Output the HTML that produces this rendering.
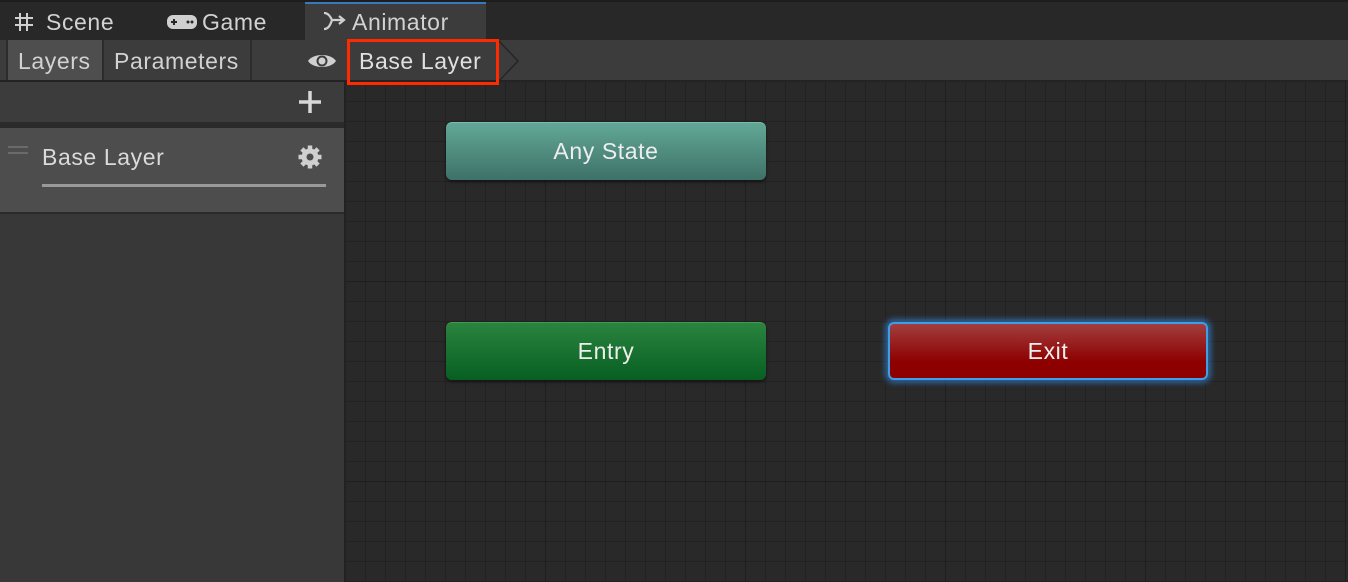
<!DOCTYPE html>
<html><head><style>
*{margin:0;padding:0;box-sizing:border-box}
body{width:1348px;height:582px;overflow:hidden;background:#383838;font-family:"Liberation Sans",sans-serif;color:#d2d2d2;position:relative}
.abs{position:absolute}
.t{font-size:23px;letter-spacing:0.6px;white-space:nowrap}
.node{position:absolute;border-radius:6px;color:#eee;font-size:23px;letter-spacing:0.6px;text-align:center;line-height:56px;box-shadow:0 2px 3px rgba(0,0,0,.5)}
</style></head><body>
<!-- tab bar -->
<div class="abs" style="left:0;top:0;width:1348px;height:40px;background:#282828;border-top:2px solid #1d1d1d"></div>
<div class="abs" style="left:305px;top:2px;width:181px;height:38px;background:#3c3c3c;border-top:2px solid #3a79bb"></div>
<svg class="abs" style="left:14px;top:12px" width="20" height="20" viewBox="0 0 20 20" stroke="#d0d0d0" stroke-width="2"><path d="M6 1v18M13 1v18M1 6h18M1 13h18"/></svg>
<div class="abs t" style="left:46px;top:9px">Scene</div>
<svg class="abs" style="left:167px;top:15px" width="30" height="14" viewBox="0 0 30 14"><rect x="0" y="0" width="30" height="14" rx="6" fill="#d0d0d0"/><rect x="4" y="6" width="6" height="2" fill="#282828"/><rect x="6" y="4" width="2" height="6" fill="#282828"/><circle cx="21" cy="7" r="1.5" fill="#282828"/><circle cx="25" cy="7" r="1.5" fill="#282828"/></svg>
<div class="abs t" style="left:202px;top:9px">Game</div>
<svg class="abs" style="left:322px;top:11px" width="24" height="22" viewBox="0 0 24 22" fill="none" stroke="#d0d0d0" stroke-width="2.2"><path d="M2 2c4 0 6 3 8 7h12M2 18c4 0 6-3 8-9M17 5l5 4-5 4"/></svg>
<div class="abs t" style="left:352px;top:9px">Animator</div>
<!-- toolbar -->
<div class="abs" style="left:0;top:40px;width:1348px;height:40px;background:#3c3c3c"></div>
<div class="abs" style="left:0;top:80px;width:1348px;height:2px;background:#232323"></div>
<div class="abs" style="left:6px;top:40px;width:2px;height:40px;background:#2c2c2c"></div>
<div class="abs" style="left:8px;top:40px;width:94px;height:40px;background:#4e4e4e"></div>
<div class="abs" style="left:102px;top:40px;width:2px;height:40px;background:#2c2c2c"></div>
<div class="abs" style="left:250px;top:40px;width:2px;height:40px;background:#2c2c2c"></div>
<div class="abs t" style="left:18px;top:48px">Layers</div>
<div class="abs t" style="left:114px;top:48px">Parameters</div>
<svg class="abs" style="left:307px;top:51px" width="30" height="20" viewBox="0 0 30 20"><path d="M1 10C6 2 24 2 29 10C24 18 6 18 1 10Z" fill="#d0d0d0"/><circle cx="15" cy="10" r="5.5" fill="#3c3c3c"/><circle cx="15" cy="10" r="3.5" fill="#d0d0d0"/></svg>
<svg class="abs" style="left:496px;top:40px" width="24" height="42" viewBox="0 0 24 42"><path d="M2 0L22 21L2 42" fill="#3c3c3c" stroke="#252525" stroke-width="1.5"/></svg>
<div class="abs t" style="left:359px;top:48px;color:#e0e0e0">Base Layer</div>
<!-- left panel -->
<div class="abs" style="left:0;top:82px;width:344px;height:40px;background:#3c3c3c"></div>
<svg class="abs" style="left:298px;top:90px" width="24" height="24" viewBox="0 0 24 24" stroke="#d8d8d8" stroke-width="3.5"><path d="M12 1v22M1 12h22"/></svg>
<div class="abs" style="left:0;top:122px;width:344px;height:6px;background:#2a2a2a"></div>
<div class="abs" style="left:0;top:128px;width:344px;height:84px;background:#4d4d4d"></div>
<div class="abs" style="left:8px;top:146px;width:20px;height:2px;background:#6a6a6a"></div>
<div class="abs" style="left:8px;top:152px;width:20px;height:2px;background:#6a6a6a"></div>
<div class="abs t" style="left:42px;top:144px;color:#dadada">Base Layer</div>
<svg class="abs" style="left:297px;top:144px" width="26" height="26" viewBox="0 0 26 26"><g fill="#d0d0d0"><circle cx="13" cy="13" r="8.5"/><g stroke="#d0d0d0" stroke-width="4.5"><path d="M13 1.5v23M1.5 13h23M4.9 4.9l16.2 16.2M21.1 4.9L4.9 21.1"/></g></g><circle cx="13" cy="13" r="3.5" fill="#4d4d4d"/></svg>
<div class="abs" style="left:42px;top:184px;width:284px;height:3px;background:#999"></div>
<div class="abs" style="left:0;top:212px;width:344px;height:2px;background:#2a2a2a"></div>
<!-- graph -->
<div class="abs" style="left:344px;top:82px;width:1004px;height:500px;background-color:#292929;
background-image:linear-gradient(90deg,#1e1e1e 0 1px,transparent 1px),linear-gradient(#1e1e1e 0 1px,transparent 1px),linear-gradient(90deg,#222 0 1px,transparent 1px),linear-gradient(#222 0 1px,transparent 1px);
background-size:200px 200px,200px 200px,20px 20px,20px 20px;background-position:201px 199px,201px 199px,1px -1px,1px -1px"></div>
<div class="abs" style="left:344px;top:82px;width:2px;height:500px;background:#222"></div>
<div class="node" style="left:446px;top:122px;width:320px;height:58px;background:linear-gradient(#62a896,#3e7168);border-top:1px solid #7bbcaa">Any State</div>
<div class="node" style="left:446px;top:322px;width:320px;height:58px;background:linear-gradient(#2a843e,#075f22);border-top:1px solid #3f9a50">Entry</div>
<div class="node" style="left:888px;top:322px;width:320px;height:58px;background:linear-gradient(#a23e3e,#8e0000 70%);border:2px solid #3e9ee8;box-shadow:0 0 6px 3px rgba(50,140,230,.6);line-height:54px">Exit</div>
<div class="abs" style="left:347px;top:39px;width:152px;height:46px;border:3px solid #ff2a00"></div>
</body></html>
